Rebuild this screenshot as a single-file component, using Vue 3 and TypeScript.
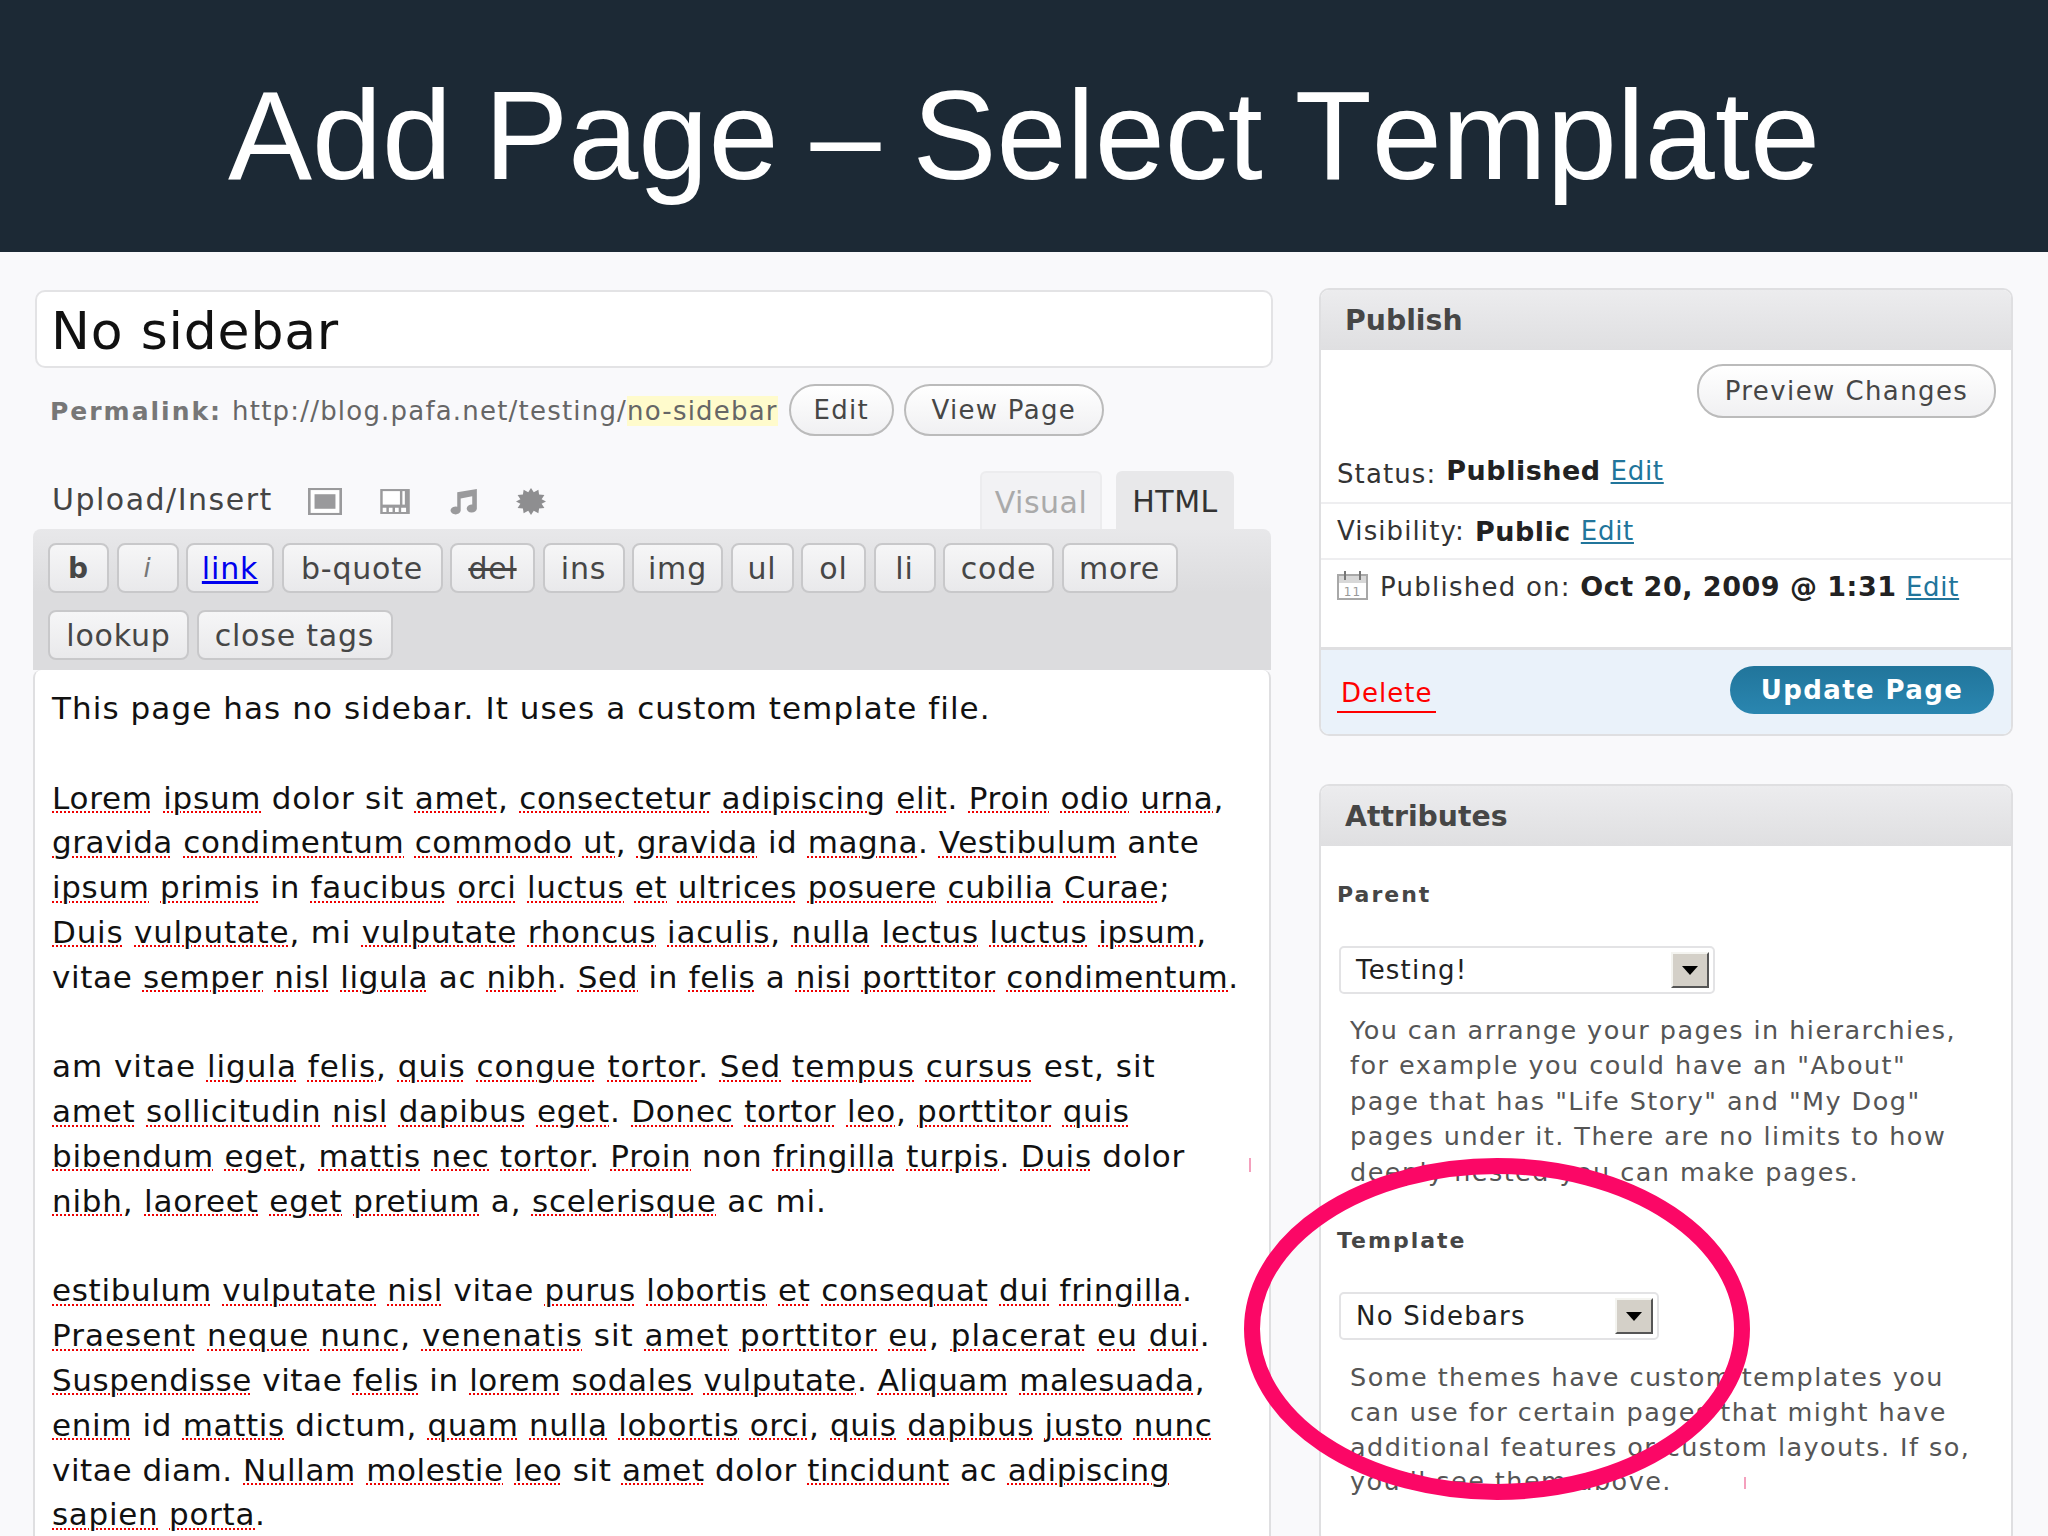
<script setup lang="ts">
type Seg = { t: string; bad: boolean }
const raw: string[] = [
  'This page has no sidebar. It uses a custom template file.',
  '',
  '[Lorem] [ipsum] dolor sit [amet], [consectetur] [adipiscing] [elit]. [Proin] [odio] [urna],',
  '[gravida] [condimentum] [commodo] [ut], [gravida] id [magna]. [Vestibulum] ante',
  '[ipsum] [primis] in [faucibus] [orci] [luctus] [et] [ultrices] [posuere] [cubilia] [Curae];',
  '[Duis] [vulputate], mi [vulputate] [rhoncus] [iaculis], [nulla] [lectus] [luctus] [ipsum],',
  'vitae [semper] [nisl] [ligula] ac [nibh]. [Sed] in [felis] a [nisi] [porttitor] [condimentum].',
  '',
  'am vitae [ligula] [felis], [quis] [congue] [tortor]. [Sed] [tempus] [cursus] est, sit',
  '[amet] [sollicitudin] [nisl] [dapibus] [eget]. [Donec] [tortor] [leo], [porttitor] [quis]',
  '[bibendum] [eget], [mattis] [nec] [tortor]. [Proin] non [fringilla] [turpis]. [Duis] dolor',
  '[nibh], [laoreet] [eget] [pretium] a, [scelerisque] ac mi.',
  '',
  '[estibulum] [vulputate] [nisl] vitae [purus] [lobortis] [et] [consequat] [dui] [fringilla].',
  '[Praesent] [neque] [nunc], [venenatis] sit [amet] [porttitor] [eu], [placerat] [eu] [dui].',
  '[Suspendisse] vitae [felis] in [lorem] [sodales] [vulputate]. [Aliquam] [malesuada],',
  '[enim] id [mattis] dictum, [quam] [nulla] [lobortis] [orci], [quis] [dapibus] [justo] [nunc]',
  'vitae diam. [Nullam] [molestie] [leo] sit [amet] dolor [tincidunt] ac [adipiscing]',
  '[sapien] [porta].',
]
const tracking: number[] = [1.08, 0, 0.73, 0.55, 0.66, 0.78, 0.64, 0, 0.98, 0.75, 0.71, 0.8, 0, 0.67, 1.02, 0.57, 0.64, 0.57, 0.71]
const lines: Seg[][] = raw.map((l) =>
  l.split(/(\[[^\]]+\])/).filter(Boolean).map((p) =>
    p.startsWith('[') ? { t: p.slice(1, -1), bad: true } : { t: p, bad: false },
  ),
)
const row1 = [
  { t: 'b', c: 'q-b', w: 61 }, { t: 'i', c: 'q-i', w: 62 }, { t: 'link', c: 'q-link', w: 88 },
  { t: 'b-quote', c: '', w: 161 }, { t: 'del', c: 'q-del', w: 85 }, { t: 'ins', c: '', w: 82 },
  { t: 'img', c: '', w: 91 }, { t: 'ul', c: '', w: 63 }, { t: 'ol', c: '', w: 65 },
  { t: 'li', c: '', w: 62 }, { t: 'code', c: '', w: 111 }, { t: 'more', c: '', w: 116 },
]
const row2 = [{ t: 'lookup', w: 141 }, { t: 'close tags', w: 196 }]
const help1 = [
  'You can arrange your pages in hierarchies,',
  'for example you could have an "About"',
  'page that has "Life Story" and "My Dog"',
  'pages under it. There are no limits to how',
  'deeply nested you can make pages.',
]
const help2 = [
  'Some themes have custom templates you',
  'can use for certain pages that might have',
  'additional features or custom layouts. If so,',
  "you'll see them above.",
]
</script>

<template>
  <div class="slide">
    <header class="head"><h1>Add Page – Select Template</h1></header>
    <div class="cols">
      <main class="left">
        <div class="title-input">No sidebar</div>
        <div class="permalink">
          <b>Permalink:</b>
          <span class="url">http://blog.pafa.net/testing/<mark>no-sidebar</mark></span>
          <span class="pill pill-edit">Edit</span>
          <span class="pill pill-view">View Page</span>
        </div>
        <div class="media-row">
          <div class="upload">
            <span class="upload-label">Upload/Insert</span>
            <svg class="ic ic1" width="34" height="27" viewBox="0 0 26 26" preserveAspectRatio="none">
              <rect x="1" y="1" width="24" height="24" fill="#fff" stroke="#9a9a9c" stroke-width="2" />
              <rect x="5" y="6" width="16" height="14" fill="#9a9a9c" />
            </svg>
            <svg class="ic ic2" width="32" height="27" viewBox="0 0 26 26" preserveAspectRatio="none">
              <rect x="1" y="1" width="24" height="24" fill="#9a9a9c" />
              <rect x="3" y="3" width="14" height="13" fill="#fff" />
              <rect x="19" y="3" width="2" height="13" fill="#fff" />
              <path d="M3 19h3v4H3zM8 19h3v4H8zM13 19h3v4h-3zM18 19h4v4h-4z" fill="#fff" />
            </svg>
            <svg class="ic ic3" width="30" height="27" viewBox="0 0 26 26" preserveAspectRatio="none">
              <path d="M8 4 L25 1 V20 A4.4 3.8 0 1 1 21 16 V8 L11 10 V22 A4.4 3.8 0 1 1 8 18 Z" fill="#9a9a9c" />
            </svg>
            <svg class="ic ic4" width="30" height="27" viewBox="0 0 26 26" preserveAspectRatio="none">
              <path d="M13 0l2.4 4 4-2.4.6 4.6 4.6.6-2.4 4 3.8 2.2-3.8 2.2 2.4 4-4.6.6-.6 4.6-4-2.4L13 26l-2.4-4-4 2.4-.6-4.6-4.6-.6 2.4-4L0 13l3.8-2.2-2.4-4 4.6-.6.6-4.6 4 2.4z" fill="#8e8e90" />
            </svg>
          </div>
          <div class="tabs">
            <span class="tab tab-off">Visual</span>
            <span class="tab tab-on">HTML</span>
          </div>
        </div>
        <div class="toolbar">
          <div class="btn-row">
            <span v-for="b in row1" :key="b.t" class="qt" :class="b.c" :style="{ width: b.w + 'px' }">{{ b.t }}</span>
          </div>
          <div class="btn-row">
            <span v-for="b in row2" :key="b.t" class="qt" :style="{ width: b.w + 'px' }">{{ b.t }}</span>
          </div>
        </div>
        <div class="editor">
          <div v-for="(l, i) in lines" :key="i" class="ln" :style="{ letterSpacing: tracking[i] + 'px' }">
            <template v-for="(s, j) in l" :key="j"><span v-if="s.bad" class="bad">{{ s.t }}</span><template v-else>{{ s.t }}</template></template>
          </div>
        </div>
      </main>

      <aside class="right">
        <section class="box publish">
          <h3 class="box-head">Publish</h3>
          <div class="preview-row"><span class="pill pill-preview">Preview Changes</span></div>
          <div class="pub-row row-status">Status: <b class="lift">Published</b> <a class="edit lift">Edit</a></div>
          <div class="pub-row row-vis">Visibility: <b>Public</b> <a class="edit">Edit</a></div>
          <div class="pub-row row-date">
            <svg class="cal" width="31" height="29" viewBox="0 0 31 29">
              <rect x="1" y="4" width="29" height="24" fill="#fff" stroke="#a8a8a8" stroke-width="2" />
              <rect x="2" y="5" width="27" height="7" fill="#d8d8d8" />
              <path d="M8 0v9M23 0v9" stroke="#777" stroke-width="2" />
              <text x="15.5" y="25" text-anchor="middle" font-size="12" fill="#999">11</text>
            </svg>
            <span>Published on: <b>Oct 20, 2009 @ 1:31</b> <a class="edit">Edit</a></span>
          </div>
          <div class="pub-foot">
            <a class="delete">Delete</a>
            <span class="update">Update Page</span>
          </div>
        </section>

        <section class="box attrs">
          <h3 class="box-head head-attr">Attributes</h3>
          <div class="attr-label label-parent">Parent</div>
          <div class="sel sel-parent">
            <span>Testing!</span>
            <span class="arrow"><i></i></span>
          </div>
          <div class="help help-one">
            <div v-for="h in help1" :key="h">{{ h }}</div>
          </div>
          <div class="attr-label label-template">Template</div>
          <div class="sel sel-template">
            <span>No Sidebars</span>
            <span class="arrow"><i></i></span>
          </div>
          <div class="help help-two">
            <div v-for="h in help2" :key="h">{{ h }}</div>
          </div>
        </section>
      </aside>
    </div>

    <svg class="circle" width="2048" height="1536" viewBox="0 0 2048 1536">
      <ellipse cx="1497" cy="1329" rx="245" ry="163" fill="none" stroke="#fb0766" stroke-width="16" />
      <path d="M1250 1158v14M1745 1477v12" stroke="#f4a0bd" stroke-width="2" />
    </svg>
  </div>
</template>

<style>
html, body { margin: 0; background: #f9f9fb; }
</style>

<style scoped>
.slide {
  position: relative;
  width: 2048px;
  height: 1536px;
  overflow: hidden;
  background: #f9f9fb;
  font-family: "DejaVu Sans", Verdana, sans-serif;
  color: #333;
}
.head {
  height: 252px;
  box-sizing: border-box;
  background: #1c2935;
  display: flex;
  align-items: center;
  justify-content: center;
  padding-top: 20px;
}
.head h1 {
  margin: 0;
  font: 400 126px/1 "Liberation Sans", Arial, sans-serif;
  font-kerning: none;
  word-spacing: -3px;
  color: #fff;
}
.cols {
  display: flex;
  padding: 36px 35px 0 33px;
  gap: 48px;
}
.left { width: 1238px; flex: none; }
.right { width: 694px; flex: none; }

.title-input {
  margin: 2px 0 0 2px;
  width: 1238px;
  height: 78px;
  box-sizing: border-box;
  background: #fff;
  border: 2px solid #e3e3e5;
  border-radius: 10px;
  font-size: 52px;
  letter-spacing: 0.8px;
  line-height: 78px;
  padding-left: 14px;
  color: #111;
}
.permalink {
  display: flex;
  align-items: center;
  height: 52px;
  margin-top: 16px;
  padding-left: 17px;
  font-size: 26px;
  letter-spacing: 1.2px;
  color: #666;
  white-space: nowrap;
}
.permalink b { color: #777; margin: 2px 10px 0 0; font-size: 25px; letter-spacing: 2px; }
.url { margin-top: 2px; }
mark { background: #fffbcc; color: #666; }
.pill {
  display: inline-flex;
  align-items: center;
  justify-content: center;
  box-sizing: border-box;
  background: linear-gradient(#fff, #f0f0f2);
  border: 2px solid #bbb;
  border-radius: 26px;
  color: #464646;
  font-size: 26px;
  letter-spacing: 1.3px;
}
.pill-edit { width: 105px; height: 52px; margin-left: 11px; }
.pill-view { width: 200px; height: 52px; margin-left: 10px; }

.media-row {
  display: flex;
  justify-content: space-between;
  align-items: flex-end;
  margin-top: 35px;
  height: 58px;
}
.upload { display: flex; align-items: center; padding: 0 0 0 19px; height: 58px; }
.upload-label { font-size: 30px; letter-spacing: 1.5px; color: #444; margin-top: -1px; }
.ic { flex: none; margin-top: 2px; }
.ic1 { margin-left: 35px; }
.ic2 { margin-left: 37px; }
.ic3 { margin-left: 37px; }
.ic4 { margin-left: 38px; }
.tabs { display: flex; gap: 14px; margin-right: 37px; }
.tab {
  display: flex;
  align-items: center;
  justify-content: center;
  height: 58px;
  box-sizing: border-box;
  border-radius: 6px 6px 0 0;
  font-size: 30px;
  letter-spacing: 0.5px;
  padding-top: 2px;
}
.tab-off { width: 122px; background: #f2f2f4; border: 2px solid #ececee; border-bottom: 0; color: #aaa; }
.tab-on { width: 118px; background: #e8e8ea; color: #333; }

.toolbar {
  background: linear-gradient(#e8e8ea, #dcdcde 45%);
  border-radius: 8px 8px 0 0;
  height: 141px;
  box-sizing: border-box;
  padding: 14px 0 0 15px;
  width: 1238px;
}
.btn-row { display: flex; gap: 7.5px; height: 50px; margin-bottom: 17px; }
.qt {
  display: flex;
  align-items: center;
  justify-content: center;
  box-sizing: border-box;
  height: 50px;
  background: linear-gradient(#f6f6f7, #e9e9eb);
  border: 2px solid #c8c8ca;
  border-radius: 8px;
  font-size: 30px;
  letter-spacing: 0.8px;
  color: #464646;
}
.q-b { font-weight: 700; font-size: 28px; }
.q-i { font-style: italic; font-size: 26px; color: #777; }
.q-link { color: #0000ee; text-decoration: underline; }
.q-del { text-decoration: line-through; }

.editor {
  background: #fff;
  border-left: 2px solid #dfdfe1;
  border-right: 2px solid #dfdfe1;
  width: 1238px;
  box-sizing: border-box;
  height: 866px;
  padding: 16px 0 0 17px;
  border-radius: 8px 8px 0 0;
  font-size: 31px;
  line-height: 44.8px;
  color: #111;
  white-space: pre;
}
.ln { height: 44.8px; }
.bad {
  text-decoration: underline dotted #e00;
  text-decoration-thickness: 2px;
  text-underline-offset: 3px;
}

.box {
  background: #fff;
  border: 2px solid #dfdfe1;
  border-radius: 10px;
  box-sizing: border-box;
  overflow: hidden;
}
.box-head {
  margin: 0;
  height: 60px;
  line-height: 62px;
  padding-left: 24px;
  font-size: 28.3px;
  font-weight: 700;
  color: #464646;
  background: linear-gradient(#ececee, #dfdfe1);
}
.publish { height: 448px; display: flex; flex-direction: column; }
.preview-row { display: flex; justify-content: flex-end; padding: 14px 15px 0 0; }
.pill-preview { width: 299px; height: 54px; letter-spacing: 1.4px; }
.pub-row { padding-left: 16px; font-size: 26px; letter-spacing: 1.1px; color: #333; white-space: nowrap; display: flex; align-items: center; gap: 10px; }
.pub-row b { color: #222; font-size: 27px; letter-spacing: 0.5px; }
.row-status { height: 45px; margin-top: 33px; border-bottom: 2px solid #eeeef0; padding-bottom: 6px; }
.lift { position: relative; top: -3px; }
.row-vis { height: 54px; border-bottom: 2px solid #eeeef0; }
.row-date { height: 52px; gap: 12px; }
.row-date span { white-space: pre; letter-spacing: 1.25px; }
.cal { flex: none; margin-top: -2px; }
.edit { color: #21759b; text-decoration: underline; letter-spacing: 0.7px; }
.pub-foot {
  margin-top: auto;
  height: 87px;
  box-sizing: border-box;
  background: #eaf2fa;
  border-top: 3px solid #dfdfe1;
  display: flex;
  justify-content: space-between;
  align-items: center;
  padding: 0 17px 4px 16px;
}
.delete { color: #f00; font-size: 26px; letter-spacing: 1px; border-bottom: 2px solid #f00; padding: 0 4px 1px; margin-top: 9px; line-height: 33px; }
.update {
  display: flex; align-items: center; justify-content: center;
  width: 264px; height: 48px;
  border-radius: 24px;
  background: linear-gradient(#21759b, #2a86b0);
  color: #fff; font-size: 26px; font-weight: 700; letter-spacing: 1.4px;
}

.attrs { margin-top: 48px; height: 760px; border-bottom: 0; }
.attr-label { padding-left: 16px; font-size: 22px; font-weight: 700; color: #464646; letter-spacing: 2px; }
.label-parent { margin-top: 35px; line-height: 28px; }
.sel {
  display: flex;
  align-items: center;
  justify-content: space-between;
  box-sizing: border-box;
  height: 48px;
  margin: 37px 0 0 18px;
  border: 2px solid #e3e3e5;
  border-radius: 5px;
  background: #fff;
  padding: 0 4px 0 15px;
  font-size: 26px;
  letter-spacing: 1.2px;
  color: #222;
}
.sel-parent { width: 376px; }
.sel-template { width: 320px; }
.arrow {
  position: relative;
  width: 38px;
  height: 36px;
  box-sizing: border-box;
  background: #d4d0c8;
  border: 2px solid;
  border-color: #f4f4f0 #555 #555 #f4f4f0;
  display: flex;
  align-items: center;
  justify-content: center;
}
.arrow i {
  width: 0; height: 0;
  border-left: 8px solid transparent;
  border-right: 8px solid transparent;
  border-top: 9px solid #000;
}
.help { padding-left: 29px; font-size: 25.5px; letter-spacing: 1.45px; line-height: 35.4px; color: #555; white-space: nowrap; }
.help-one { margin-top: 19px; }
.label-template { margin-top: 37px; line-height: 28px; }
.help-two { margin-top: 20px; line-height: 34.8px; }

.circle { position: absolute; left: 0; top: 0; pointer-events: none; }
</style>
